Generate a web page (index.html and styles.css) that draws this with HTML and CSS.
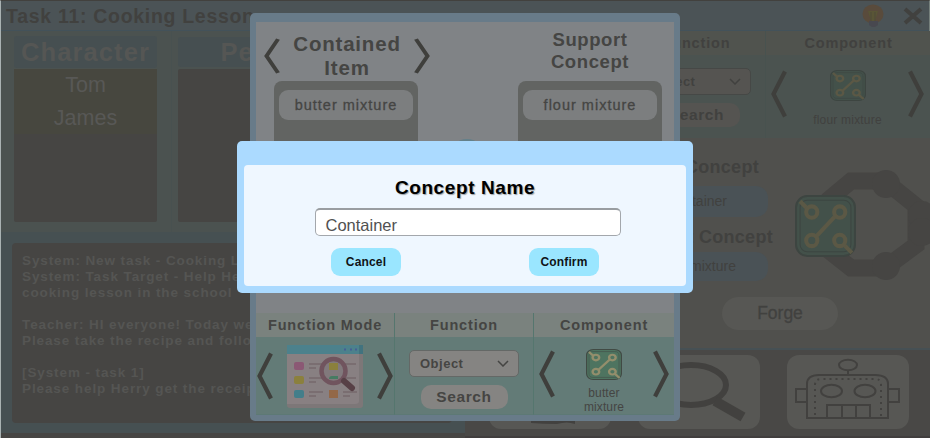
FILE: index.html
```html
<!DOCTYPE html>
<html lang="en">
<head>
<meta charset="utf-8">
<title>Concept Name</title>
<link rel="stylesheet" href="styles.css">
</head>
<body>
<svg class="defs" width="0" height="0" aria-hidden="true">
  <symbol id="chip" viewBox="0 0 60 60" preserveAspectRatio="none">
    <rect x="1" y="1" width="58" height="58" rx="11" fill="var(--chip)" stroke="var(--chip-edge)" stroke-width="2"/>
    <rect x="5" y="5" width="50" height="50" rx="7" fill="none" stroke="var(--chip-edge)" stroke-width="1"/>
    <g fill="none" stroke="var(--chip-line)" stroke-width="4">
      <path d="M5 6l8 8M20 41l21-22M48 48l8 8"/>
      <circle cx="16.500" cy="16.500" r="5.500"/><circle cx="44" cy="16.500" r="5.500"/>
      <circle cx="16.500" cy="44" r="5.500"/><circle cx="44" cy="44" r="5.500"/>
    </g>
  </symbol>
  <symbol id="left" viewBox="0 0 16 48" preserveAspectRatio="none"><path d="M14 1.500L2.500 24L14 46.500" fill="none" stroke="currentColor" stroke-width="4.200"/></symbol>
  <symbol id="right" viewBox="0 0 16 48" preserveAspectRatio="none"><path d="M2 1.500L13.500 24L2 46.500" fill="none" stroke="currentColor" stroke-width="4.200"/></symbol>
</svg>
<div class="game">
  <header class="topbar">
    <h1>Task 11: Cooking Lesson</h1>
    <svg class="bulb" width="22" height="24" viewBox="0 0 22 24"><ellipse cx="11" cy="10" rx="10.500" ry="9.500" fill="#594b3c"/><path d="M6 7h10l-3 10H9z" fill="#595536"/><path d="M9 8v9m4-9v9" stroke="#4e4b38"/><path d="M7 17h9v4l-3 2h-3l-3-2z" fill="#48484f"/></svg>
    <svg class="close" width="20" height="18" viewBox="0 0 20 18"><path d="M2 2l16 14M18 2L2 16" stroke="#41413f" stroke-width="4"/></svg>
  </header>
  <div class="columns">
    <div class="left">
      <div class="people">
        <section class="person">
          <h2>Character</h2>
          <ul><li>Tom</li><li>James</li></ul>
        </section>
        <section class="person wide">
          <h2>Performance</h2>
          <ul></ul>
        </section>
      </div>
      <div class="log"><div class="logbox">System: New task - Cooking Lesson
System: Task Target - Help Herry
cooking lesson in the school

Teacher: HI everyone! Today we
Please take the recipe and follow

[System - task 1]
Please help Herry get the receipt</div></div>
    </div>
    <div class="right">
      <div class="tools">
        <section class="tool fn">
          <h3>Function</h3>
          <div class="tool-body stack">
            <div class="select">Object<svg width="12" height="7" viewBox="0 0 12 7"><path d="M1 1l5 5 5-5" fill="none" stroke="currentColor" stroke-width="1.500"/></svg></div>
            <div class="pill">Search</div>
          </div>
        </section>
        <section class="tool comp">
          <h3>Component</h3>
          <div class="tool-body pick">
            <svg class="arrow"><use href="#left"/></svg>
            <div class="item"><svg class="chip" width="36" height="31"><use href="#chip" width="36" height="31"/></svg><span>flour mixture</span></div>
            <svg class="arrow"><use href="#right"/></svg>
          </div>
        </section>
      </div>
      <div class="forge">
        <div class="recipe">
          <h3>Main Concept</h3><div class="slot">container</div>
          <h3 class="second">Support Concept</h3><div class="slot low">flour mixture</div>
        </div>
        <svg class="ring" width="136" height="116" viewBox="0 0 136 116">
          <path d="M32 32L56 12H90L121 37V76L90 99H56L32 80" fill="none" stroke="#464543" stroke-width="17"/>
          <g fill="#464543"><circle cx="91" cy="15" r="14"/><circle cx="127" cy="46" r="14"/><circle cx="127" cy="63" r="14"/><circle cx="91" cy="97" r="14"/></g>
          <use href="#chip" x="0" y="26" width="61" height="62"/>
        </svg>
        <div class="forge-button">Forge</div>
      </div>
      <div class="dock">
        <div class="tile"><svg width="122" height="74" viewBox="0 0 122 74"><path d="M42 66q18-4 44 0v3q-8-3-18 0q-14 0-26-1z" fill="#42413f"/></svg></div>
        <div class="tile"><svg width="122" height="74" viewBox="0 0 122 74"><g fill="none" stroke="#42413f"><ellipse cx="53" cy="30" rx="35" ry="20" stroke-width="6"/><path d="M77 46l28 16" stroke-width="10"/></g></svg></div>
        <div class="tile"><svg width="122" height="74" viewBox="0 0 122 74"><g fill="none" stroke="#42413f" stroke-width="2"><path d="M20 63V29q0-9 12-9h56q13 0 13 9v34zM61 20v-5M20 34H9v13h11M101 34h11v13h-11M40 63V50h43v13M55 50v13M69 50v13"/><ellipse cx="61" cy="10" rx="9" ry="5.300"/><ellipse cx="44.500" cy="36" rx="10.500" ry="6.300"/><ellipse cx="78" cy="36" rx="10.500" ry="6.300"/><path d="M28 60V30q0-6 6-6h54q6 0 6 6v31" stroke-dasharray="2 4"/></g></svg></div>
      </div>
    </div>
  </div>
</div>

<div class="workshop">
  <div class="workshop-main">
    <div class="concept">
      <div class="concept-title"><svg class="arrow small"><use href="#left"/></svg><h2>Contained<br>Item</h2><svg class="arrow small"><use href="#right"/></svg></div>
      <div class="card"><div class="chipname">butter mixture</div></div>
    </div>
    <div class="link"></div>
    <div class="concept support">
      <div class="concept-title"><h2>Support<br>Concept</h2></div>
      <div class="card"><div class="chipname">flour mixture</div></div>
    </div>
  </div>
  <div class="tools lit">
    <section class="tool mode">
      <h3>Function Mode</h3>
      <div class="tool-body pick">
        <svg class="arrow"><use href="#left"/></svg>
        <svg class="browser" width="76" height="63" viewBox="0 0 76 63">
          <rect width="76" height="63" rx="3" fill="#7d7778"/><path d="M0 9h72v47q0 3-4 3H0z" fill="#888082"/><path d="M0 0h76v9H0z" fill="#4c818c"/><path d="M72 0h4v9h-4z" fill="#41737f"/>
          <path d="M57 4.500h2m4 0h2m3 0h2" stroke="#455f94" stroke-width="2"/>
          <g stroke="#75686c" stroke-width="1.500"><path d="M22 19h17M22 23h7M22 33h17M22 37h7M22 47h14M22 51h7M52 19h17M52 33h17M56 47h14M56 51h7"/></g>
          <rect x="7" y="17" width="10" height="8" rx="2" fill="#8b5874"/><rect x="7" y="31" width="10" height="8" rx="2" fill="#8b803d"/><rect x="7" y="45" width="10" height="8" rx="2" fill="#437e8a"/><rect x="42" y="45" width="9" height="8" fill="#936848"/>
          <circle cx="46.500" cy="26" r="12" fill="#81797c" stroke="#70545e" stroke-width="4.500"/><rect x="42" y="18" width="9" height="7" fill="#8b803d"/><path d="M42 34q0-3 3-3h6v3z" fill="#467b62"/><path d="M57 36l8 7" stroke="#574046" stroke-width="6" stroke-linecap="round"/>
        </svg>
        <svg class="arrow"><use href="#right"/></svg>
      </div>
    </section>
    <section class="tool fn">
      <h3>Function</h3>
      <div class="tool-body stack">
        <div class="select">Object<svg width="12" height="7" viewBox="0 0 12 7"><path d="M1 1l5 5 5-5" fill="none" stroke="currentColor" stroke-width="1.500"/></svg></div>
        <div class="pill">Search</div>
      </div>
    </section>
    <section class="tool comp">
      <h3>Component</h3>
      <div class="tool-body pick">
        <svg class="arrow"><use href="#left"/></svg>
        <div class="item"><svg class="chip" width="36" height="31"><use href="#chip" width="36" height="31"/></svg><span>butter<br>mixture</span></div>
        <svg class="arrow"><use href="#right"/></svg>
      </div>
    </section>
  </div>
</div>

<div class="dialog">
  <div class="dialog-body">
    <h2>Concept Name</h2>
    <div class="field">Container</div>
    <div class="actions"><button>Cancel</button><button>Confirm</button></div>
  </div>
</div>
</body>
</html>
```

FILE: styles.css
```css
* { box-sizing: border-box; }
body { margin: 0; width: 930px; height: 438px; overflow: hidden; position: relative; font-family: "Liberation Sans", Arial, sans-serif; background: #464543; }
h1, h2, h3, ul { margin: 0; padding: 0; list-style: none; }
svg { display: block; flex: none; }
.defs { position: absolute; }

.game { height: 438px; display: flex; flex-direction: column; border-top: 1px solid #42413e; border-left: 1px solid #a9b2b2; border-right: 1px solid #76807c; color: #41413f; --chip: #43514a; --chip-edge: #3d4541; --chip-line: #5b5845; }
.topbar { height: 30px; flex: none; display: flex; align-items: center; background: #4b5356; border-bottom: 1px solid #43525a; padding: 0 6px 0 5px; }
.topbar h1 { font-size: 19.5px; line-height: 28px; letter-spacing: .7px; flex: 1; white-space: nowrap; }
.bulb { margin-right: 19px; }
.columns { flex: 1; display: flex; min-height: 0; }
.left { width: 464px; display: flex; flex-direction: column; flex: none; }
.people { height: 201px; display: flex; background: #4b5250; }
.person { width: 171px; padding: 5px 14px 0 13px; border-right: 1px solid #485150; }
.person h2 { height: 32px; margin-bottom: 1px; background: #464f51; border-radius: 3px; text-align: center; font-size: 25.5px; line-height: 33px; letter-spacing: 1.1px; color: #555654; }
.person ul { height: 153px; background: #464543; border-radius: 2px; }
.person li { height: 32.500px; background: #47473f; text-align: center; font-size: 21.5px; line-height: 32px; color: #585856; }
.person.wide { flex: 1; padding: 6px 12px 0 6px; border: 0; }
.person.wide h2 { height: 30px; margin-bottom: 2px; line-height: 31px; padding-right: 22px; }
.log { height: 201px; background: #465052; padding: 11px 13px 11px 11px; }
.logbox { height: 180px; overflow: hidden; background: #464543; border-radius: 4px; padding: 10px; white-space: pre; font-weight: bold; font-size: 13.5px; line-height: 16.050px; letter-spacing: .9px; color: #555553; }

.right { flex: 1; display: flex; flex-direction: column; background: #50504d; }
.tools { display: flex; height: 107px; }
.tool { display: flex; flex-direction: column; border-right: 1px solid #48524f; background: #4b5350; }
.tool:last-child { border-right: 0; }
.tool h3 { height: 24px; font-size: 14.5px; line-height: 25px; letter-spacing: .85px; text-align: center; background: #50534e; white-space: nowrap; }
.tool-body { flex: 1; display: flex; }
.stack { flex-direction: column; align-items: center; padding-top: 13px; gap: 8px; }
.select { width: 110px; height: 27px; border: 1px solid #464846; border-radius: 5px; background: #555451; display: flex; align-items: center; justify-content: space-between; padding: 0 9px 0 10px; font-size: 13px; font-weight: bold; letter-spacing: .5px; }
.pill { width: 87px; height: 24px; border-radius: 10px; background: #555451; text-align: center; font-size: 15.500px; line-height: 24px; font-weight: bold; letter-spacing: .6px; }
.right .fn { width: 301px; padding-left: 163px; }
.right .select { margin-right: 1px; }
.right .comp { flex: 1; }
.pick { justify-content: space-between; align-items: flex-start; padding: 15px 7px 0 5px; }
.arrow { width: 16px; height: 48px; color: #3f3f3c; }
.item { display: flex; flex-direction: column; align-items: center; text-align: center; font-size: 12px; line-height: 13.500px; }
.right .item span { margin-top: 13px; letter-spacing: .2px; }
.forge { flex: 1; display: grid; grid-template-columns: 330px 1fr; grid-template-rows: 159px 1fr; border-bottom: 2px solid #465054; overflow: hidden; }
.recipe { width: 310px; padding-top: 18px; }
.recipe h3 { font-size: 18px; line-height: 22px; letter-spacing: .3px; text-align: right; padding-right: 16px; white-space: nowrap; }
.recipe h3.second { padding-right: 2px; margin-top: 9px; }
.slot { width: 150px; height: 31px; margin: 8px 0 0 153px; border-radius: 12px; background: #4a5256; text-align: right; padding-right: 41px; font-size: 14px; line-height: 31px; }
.slot.low { height: 29px; line-height: 29px; margin-top: 4px; padding-right: 32px; }
.ring { margin-top: 31px; }
.forge-button { margin: 0 0 0 257px; width: 116px; height: 33px; border-radius: 17px; background: #575754; font-size: 17.5px; line-height: 33px; text-align: center; -webkit-text-stroke: .3px #41413f; }
.dock { height: 88px; flex: none; display: flex; gap: 27px; padding: 5px 0 0 24px; background: #494846; border-bottom: 2px solid #413e3e; }
.tile { width: 122px; height: 74px; border-radius: 12px; background: #575754; }

.workshop { position: absolute; left: 250px; top: 13px; width: 430px; height: 408px; padding: 9px 6px 6px; border-radius: 5px; background: #687b89; display: flex; flex-direction: column; color: #454543; --chip: #4e7460; --chip-edge: #414a44; --chip-line: #938e6c; }
.workshop-main { flex: 1; display: flex; justify-content: space-between; background: #808386; padding: 0 12px 0 8px; }
.concept { width: 166px; display: flex; flex-direction: column; align-items: center; }
.concept-title { height: 59px; width: 100%; display: flex; justify-content: space-between; padding-top: 10px; }
.concept h2 { font-size: 20.5px; line-height: 24px; letter-spacing: .8px; text-align: center; }
.arrow.small { width: 16px; height: 36px; margin-top: 6px; }
.card { width: 144px; height: 200px; margin-right: 2px; border-radius: 8px; background: #626462; padding: 9px 5px; }
.chipname { height: 30px; border-radius: 9px; background: #7c7e7f; text-align: center; font-size: 14.5px; line-height: 30px; letter-spacing: 1px; -webkit-text-stroke: .3px #454543; }
.support { width: 144px; }
.support .concept-title { justify-content: center; padding-top: 7px; }
.support h2 { font-size: 18.5px; line-height: 21.500px; letter-spacing: .6px; }
.support .card { margin: 0; }
.link { width: 36px; height: 36px; margin: 117px 0 0 -14px; border-radius: 18px; background: #63808a; }
.lit { height: 102px; flex: none; }
.lit .tool { width: 139px; background: #637b77; border-color: #55766e; border-bottom: 1px solid #5d7975; }
.lit .tool h3 { background: #7a827e; }
.lit .tool.comp { flex: 1; }
.lit .mode .pick { padding: 15px 1px 0 1px; }
.lit .mode .browser { margin-top: -7px; }
.lit .comp .pick { padding: 13px 5px 0 5px; }
.lit .comp .item { margin: -1px 0 0; }
.lit .item span { margin-top: 7px; letter-spacing: .1px; }
.lit .select { background: #858482; border-color: #646866; }
.lit .pill { background: #858482; }

.dialog { position: absolute; left: 237px; top: 141px; width: 456px; height: 152px; padding: 24px 7px 7px; border-radius: 5px; background: #abdaff; }
.dialog-body { height: 121px; border-radius: 4px; background: #eff7ff; display: flex; flex-direction: column; align-items: center; }
.dialog h2 { font-size: 19px; line-height: 24px; letter-spacing: .6px; margin: 11px 0 8px; color: #000; text-shadow: 1px 1px 1px #9aa0a5; }
.field { width: 306px; height: 28px; margin-left: 5px; border: 1px solid #a3a7ac; border-top: 2px solid #999da1; border-radius: 5px; background: #fff; font-size: 16.5px; line-height: 30px; padding-left: 10px; color: #515151; }
.actions { width: 268px; display: flex; justify-content: space-between; margin-top: 12px; }
button { width: 70px; height: 28px; border: 0; padding: 0; border-radius: 9px; background: #9ae6ff; font: bold 12px/28px "Liberation Sans", Arial, sans-serif; letter-spacing: .15px; color: #101417; }
```
